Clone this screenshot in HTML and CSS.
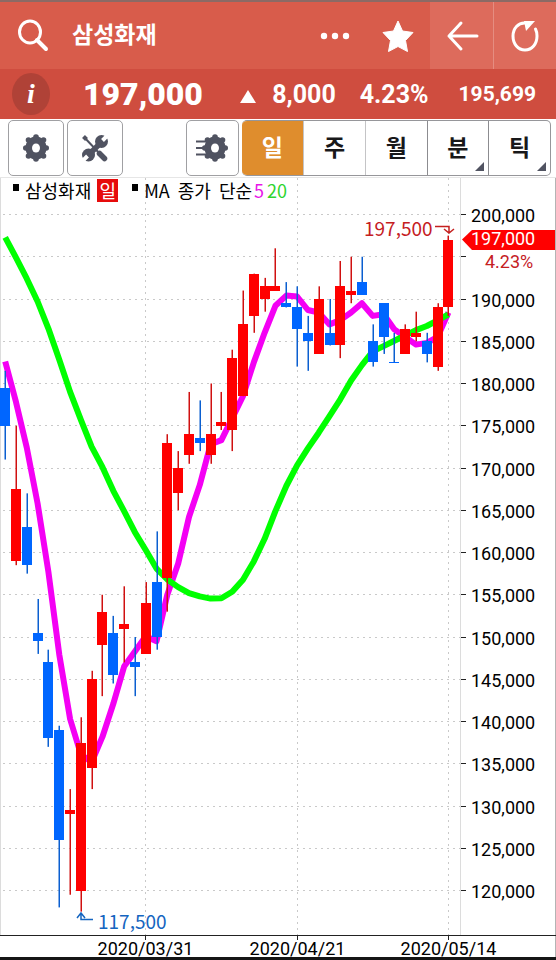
FILE: index.html
```html
<!DOCTYPE html>
<html lang="ko">
<head>
  <meta charset="UTF-8">
  <meta name="viewport" content="width=device-width, initial-scale=1">
  <title>삼성화재</title>
  <link rel="stylesheet" href="styles.css">
</head>
<body>
  <header class="topbar">
    <button class="icon-btn search" aria-label="검색">
      <svg width="32" height="34" viewBox="0 0 32 34" fill="none" stroke="#fff">
        <ellipse cx="12" cy="13" rx="10.5" ry="11" stroke-width="3"/>
        <path d="M19 21l9 9" stroke-width="4" stroke-linecap="round"/>
      </svg>
    </button>
    <h1>삼성화재</h1>
    <button class="icon-btn more" aria-label="더보기">
      <svg width="30" height="8" viewBox="0 0 30 8" fill="#fff">
        <circle cx="4" cy="4" r="3.2"/><circle cx="15" cy="4" r="3.2"/><circle cx="26" cy="4" r="3.2"/>
      </svg>
    </button>
    <button class="icon-btn star" aria-label="관심종목">
      <svg width="32" height="34" viewBox="0 0 32 34" fill="#fff" stroke="#fff" stroke-linejoin="round">
        <path d="M16 2l4.500 10 10.500 1.500-7.500 8 2 11-9.500-5-9.500 5 2-11-7.500-8 10.500-1.500z"/>
      </svg>
    </button>
    <a class="nav-btn" href="#" aria-label="뒤로">
      <svg width="34" height="32" viewBox="0 0 34 32" fill="none" stroke="#fff" stroke-width="3" stroke-linecap="round" stroke-linejoin="round">
        <path d="M16 3L4 16l12 13M4 16h28"/>
      </svg>
    </a>
    <button class="nav-btn" aria-label="새로고침">
      <svg width="30" height="34" viewBox="0 0 30 34">
        <path d="M16 4C8 3 3 10 3 17c0 8 5 14 12 14s12-6 12-14c0-3-.5-5-1.500-7" fill="none" stroke="#fff" stroke-width="3" stroke-linecap="round"/>
        <path d="M14 2h11l-9 10z" fill="#fff"/>
      </svg>
    </button>
  </header>

  <section class="pricebar">
    <button class="info" aria-label="종목정보"><i>i</i></button>
    <strong class="price">197,000</strong>
    <span class="up"></span>
    <span class="change">8,000</span>
    <span class="rate">4.23%</span>
    <span class="volume">195,699</span>
  </section>

  <nav class="toolbar">
    <button class="tool" aria-label="설정">
      <svg width="28" height="30" viewBox="-14 -15 28 30">
        <use href="#gear"/>
      </svg>
    </button>
    <button class="tool" aria-label="도구">
      <svg width="28" height="30" viewBox="0 0 28 30" stroke="#505361">
        <path d="M3 4l16 17" stroke-width="2"/>
        <path d="M2.500 3.500l3 3" stroke-width="4"/>
        <path d="M18.500 20.500l5 5" stroke-width="5.500" stroke-linecap="round"/>
        <path d="M8 21.500L20 9.500" stroke-width="5.500"/>
        <circle cx="20.500" cy="8.500" r="6.500" fill="#505361" stroke="none"/>
        <circle cx="7.500" cy="22" r="6.500" fill="#505361" stroke="none"/>
        <path d="M21.500 7.500L28 1M6.500 23L0 29.500" stroke="#fff" stroke-width="4"/>
      </svg>
    </button>
    <button class="tool list" aria-label="목록 설정">
      <svg width="34" height="30" viewBox="-20 -15 34 30">
        <path d="M-19-6.500h10M-19 0h8M-19 6.500h10" stroke="#505361" stroke-width="2"/>
        <g id="gear" fill="#505361">
          <ellipse rx="10.500" ry="11.500"/>
          <circle cx="10.200" r="2.800"/><circle cx="-10.200" r="2.800"/>
          <circle cy="11" r="2.800"/><circle cy="-11" r="2.800"/>
          <circle cx="7.500" cy="8" r="2.800"/><circle cx="-7.500" cy="8" r="2.800"/>
          <circle cx="7.500" cy="-8" r="2.800"/><circle cx="-7.500" cy="-8" r="2.800"/>
          <ellipse rx="4" ry="4.500" fill="#fff"/>
        </g>
      </svg>
    </button>
    <div class="periods">
      <button class="active">일</button>
      <button>주</button>
      <button>월</button>
      <button class="menu">분</button>
      <button class="menu">틱</button>
    </div>
  </nav>

  <main class="chart">
    <div class="legend">
      <span class="mark"></span><span>삼성화재</span><span class="day">일</span>
      <span class="mark second"></span><span class="ma">MA</span><span class="ma">종가</span><span>단순</span><span class="ma5">5</span><span class="ma20">20</span>
    </div>
    <svg id="chart" viewBox="0 178 556 779" role="img" aria-label="삼성화재 일봉 차트"></svg>
  </main>

  <script src="chart.js"></script>
</body>
</html>
```
FILE: styles.css
```css
* {
  box-sizing: border-box;
}

body {
  margin: 0;
  background: #fff;
  font-family: Roboto, "Noto Sans CJK KR", sans-serif;
}

button {
  margin: 0;
  padding: 0;
  border: 0;
  background: none;
  color: inherit;
  font: inherit;
  cursor: pointer;
}

svg {
  display: block;
}

/* title bar */
.topbar {
  display: flex;
  align-items: center;
  height: 69px;
  border-top: 2px solid #8b6a65;
  background: #d85c4b;
  color: #fff;
}

.search {
  margin-left: 18px;
}

.topbar h1 {
  flex: 1;
  margin: 0 0 0 22px;
  font-size: 23px;
  font-weight: 700;
  line-height: 32px;
}

.star {
  margin: 0 16px 0 32px;
}

.nav-btn {
  display: flex;
  align-items: center;
  justify-content: center;
  width: 63px;
  height: 100%;
  background: #dd6b5c;
}

.nav-btn + .nav-btn {
  border-left: 1px solid #e58d81;
}

/* current price */
.pricebar {
  display: flex;
  align-items: center;
  height: 50px;
  padding: 0 20px 0 12px;
  background: #cf4d3f;
  color: #fff;
  font-size: 25px;
  font-weight: 700;
}

.info {
  width: 38px;
  height: 42px;
  border-radius: 50%;
  background: #b04237;
  font-family: "Liberation Serif", serif;
  font-size: 28px;
  line-height: 38px;
}

.price {
  margin-left: 33px;
  font-size: 32px;
}

.up {
  margin: 4px 16px 0 auto;
  border: 8px solid transparent;
  border-top: 0;
  border-bottom: 13px solid #fff;
}

.rate {
  margin: 0 30px 0 24px;
}

.volume {
  font-size: 21px;
}

/* chart tools and periods */
.toolbar {
  display: flex;
  height: 59px;
  padding: 1px 5px 1px 8px;
  border-bottom: 1px solid #e6e6e6;
}

.tool {
  display: flex;
  align-items: center;
  justify-content: center;
  width: 56px;
  height: 56px;
  margin-right: 3px;
  border: 1px solid #a0a0a3;
  border-radius: 5px;
}

.list {
  width: 53px;
  margin-left: auto;
}

.periods {
  display: grid;
  grid-template-columns: repeat(5, 1fr);
  width: 57%;
  height: 56px;
  border: 1px solid #96969a;
  border-left: 0;
  border-radius: 5px;
  overflow: hidden;
}

.periods button {
  position: relative;
  padding-bottom: 4px;
  border-left: 1px solid #c4c4c6;
  color: #18181a;
  font-size: 23px;
  font-weight: 700;
}

.periods .active {
  border: 0;
  background: #df8d2d;
  color: #fff;
}

.periods .menu {
  border-left-color: #8c8c90;
}

.menu::after {
  content: "";
  position: absolute;
  right: 4px;
  bottom: 4px;
  border-left: 9px solid transparent;
  border-bottom: 9px solid #505361;
}

/* chart */
.chart {
  position: relative;
  border-bottom: 3px solid #151515;
}

.legend {
  position: absolute;
  top: 0;
  left: 13px;
  display: flex;
  align-items: center;
  height: 24px;
  font-family: "Noto Sans CJK KR", sans-serif;
  font-size: 18px;
  line-height: 24px;
}

.mark {
  width: 6px;
  height: 7px;
  margin: 0 6px 5px 0;
  background: #000;
}

.second {
  margin-left: 14px;
}

.day {
  width: 21px;
  height: 23px;
  margin-left: 6px;
  background: #e60c0c;
  color: #fff;
  line-height: 22px;
  text-align: center;
}

.ma {
  margin-right: 8px;
}

.ma5 {
  margin: 0 3px 0 2px;
  color: #e815e8;
}

.ma20 {
  color: #2fd52f;
}

#chart {
  width: 100%;
  height: auto;
  overflow: visible;
}

.grid {
  stroke: #c9c9c9;
  stroke-dasharray: 2 4;
}

.frame {
  stroke: #dcdcdc;
}

.edge {
  stroke: #b4b4b4;
}

.axis {
  stroke: #222;
}

.label {
  font-size: 18px;
}

.date {
  font-size: 18px;
  text-anchor: middle;
}

.peak {
  font-family: "Noto Sans CJK KR", sans-serif;
  font-size: 19px;
}

.rise {
  fill: #c5201f;
}

.fall {
  fill: #1565c0;
}

.arrow {
  fill: none;
  stroke-width: 1.5;
}

.arrow.high {
  stroke: #c5201f;
}

.arrow.low {
  stroke: #1565c0;
}

.tag {
  fill: #f00;
}

.tag-text {
  fill: #fff;
}

.line {
  fill: none;
  stroke-width: 6;
  stroke-linejoin: round;
}

.line5 {
  stroke: #f400f4;
}

.line20 {
  stroke: #0f0;
}

.candle-up {
  fill: #f00;
}

.candle-down {
  fill: #0066ff;
}

.wick-up {
  fill: #d01010;
}

.wick-down {
  fill: #0b5fd0;
}
```
FILE: chart.js
```js
// [시가, 고가, 저가, 종가] 단위: 천원
const candles = [
  [179.5, 181.5, 171, 175], [159, 175, 158.5, 167.5], [163, 167, 157.5, 158.5],
  [150.5, 154.5, 148, 149.5], [147, 148.5, 137, 138], [139, 139.5, 118, 126],
  [129, 132, 119.5, 129.5], [120, 140.5, 117.5, 137.5], [134.5, 146, 132, 145],
  [149, 155, 143, 153], [150.5, 152.5, 144.5, 145.5], [151, 156, 147, 151.5],
  [147, 150, 143, 146.5], [148, 156.5, 148, 154], [156.5, 162.5, 148.5, 150],
  [157, 174, 153, 173], [167, 172, 165, 170], [171.5, 179, 170.5, 174],
  [173.5, 178, 172, 173], [171.5, 180, 170.5, 174], [175, 179, 174.5, 175.5],
  [174.5, 184, 172, 183], [178.5, 191, 178.5, 187], [188, 193, 186, 193],
  [190, 192.5, 188.5, 191.5], [191, 196, 191, 191.5], [189.5, 192, 189, 189],
  [189, 191.5, 182, 186.5], [186, 188, 181.5, 185], [183.5, 191.5, 183.5, 190],
  [186, 190, 184.5, 184.5], [184.5, 194.5, 183, 191.5], [190.5, 195, 189.5, 191],
  [192, 195, 190.5, 190.5], [185, 187, 182, 182.5], [189.5, 189.5, 183.5, 185.5],
  [182.5, 186, 182.5, 182.5], [183.5, 187, 183.5, 186.5], [185.5, 188.5, 185, 186],
  [185, 186, 182.5, 183.5], [182, 189.5, 181.5, 189], [189, 197.5, 188, 197]
];

// 화면 이전 데이터가 필요한 구간의 이동평균
const ma5Start = [182.6, 177.8, 172.4, 165.8];
const ma20Start = [
  197.3, 194.9, 192.4, 189.7, 186.5, 182.8, 179, 175.7, 172.5, 170.1,
  167.3, 164.9, 162.4, 160.3, 158.1, 156.8, 155.9, 155.2, 154.8
];

const dates = [[13, "2020/03/31"], [27, "2020/04/21"], [41, "2020/05/14"]];

const axisX = 460.5;
const axisY = 935.5;

function x(i) {
  return 5.2 + i * 10.81;
}

function y(price) {
  return 214.5 + (200 - price) * 8.45;
}

function average(start, count) {
  return candles.map((candle, i) => {
    if (i < count - 1) return start[i];
    const range = candles.slice(i - count + 1, i + 1);
    return range.reduce((sum, c) => sum + c[3], 0) / count;
  });
}

function line(values, name) {
  const points = values.map((v, i) => `${x(i).toFixed(1)},${y(v).toFixed(1)}`).join(" ");
  return `<polyline class="line ${name}" points="${points}"/>`;
}

let svg = "";

// 격자와 날짜
for (const [i, date] of dates) {
  const gx = Math.floor(x(i)) + 0.5;
  svg += `<path class="grid" d="M${gx} 178V935"/>`;
  svg += `<path class="axis" d="M${gx} 936v4"/>`;
  svg += `<text class="date" x="${gx}" y="955">${date}</text>`;
}

// 가격 축
for (let price = 200; price >= 120; price -= 5) {
  const gy = Math.floor(y(price)) + 0.5;
  svg += `<path class="grid" d="M3 ${gy}H460"/>`;
  svg += `<path class="axis" d="M461 ${gy}h5"/>`;
  if (price !== 195) {
    svg += `<text class="label" x="471" y="${gy + 7}">${price},000</text>`;
  }
}

svg += `<path class="frame" d="M0.5 178V935M${axisX} 178V935"/>`;
svg += `<path class="edge" d="M555.5 178V957"/>`;
svg += `<path class="axis" d="M0 ${axisY}H556"/>`;

svg += line(average(ma5Start, 5), "line5");
svg += line(average(ma20Start, 20), "line20");

// 캔들
candles.forEach(([open, high, low, close], i) => {
  const type = close > open ? "up" : "down";
  const top = Math.round(y(Math.max(open, close)));
  const bottom = Math.round(y(Math.min(open, close)));
  const cx = Math.round(x(i));
  svg += `<rect class="wick-${type}" x="${cx - 0.5}" y="${y(high)}" width="1.5" height="${y(low) - y(high)}"/>`;
  svg += `<rect class="candle-${type}" x="${cx - 5}" y="${top}" width="10" height="${Math.max(bottom - top, 1)}"/>`;
});

// 최고가, 최저가
svg += `<text class="peak rise" x="364" y="236">197,500</text>`;
svg += `<path class="arrow high" d="M435 226.500h14v6M444 229l5 4 5-4"/>`;
svg += `<text class="peak fall" x="98" y="929">117,500</text>`;
svg += `<path class="arrow low" d="M93 919.500H81v-6M77 918l4-5 4 5"/>`;

// 현재가
svg += `<path class="tag" d="M462 239.500l10-9.500h83v20h-83z"/>`;
svg += `<text class="label tag-text" x="471" y="245">197,000</text>`;
svg += `<text class="label rise" x="485" y="268">4.23%</text>`;

document.getElementById("chart").innerHTML = svg;
```
